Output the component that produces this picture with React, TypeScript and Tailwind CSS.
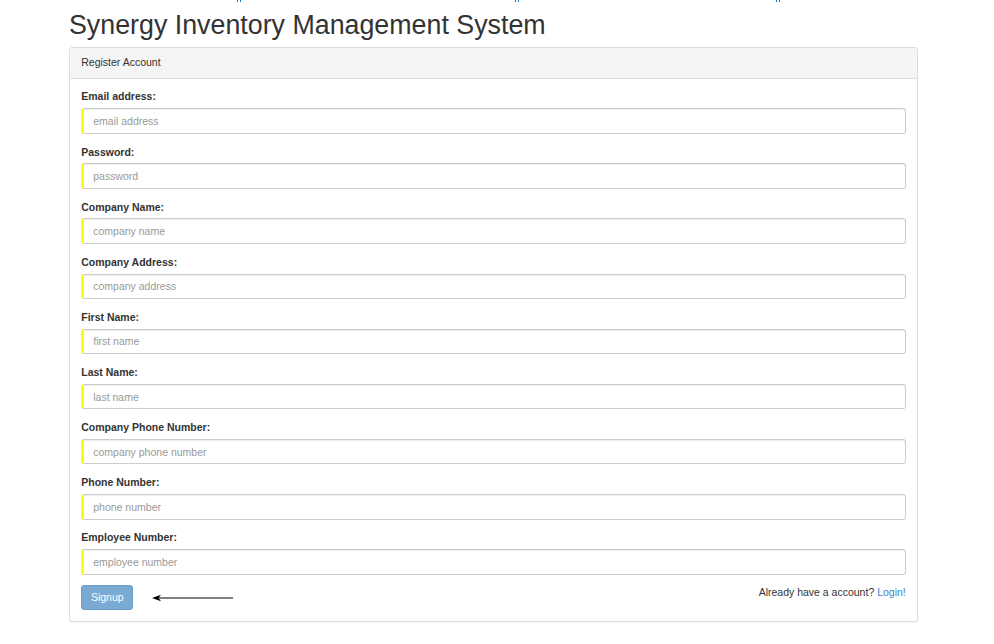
import React from 'react';

const fields = [
  { label: 'Email address:', placeholder: 'email address', type: 'email' },
  { label: 'Password:', placeholder: 'password', type: 'password' },
  { label: 'Company Name:', placeholder: 'company name', type: 'text' },
  { label: 'Company Address:', placeholder: 'company address', type: 'text' },
  { label: 'First Name:', placeholder: 'first name', type: 'text' },
  { label: 'Last Name:', placeholder: 'last name', type: 'text' },
  { label: 'Company Phone Number:', placeholder: 'company phone number', type: 'text' },
  { label: 'Phone Number:', placeholder: 'phone number', type: 'text' },
  { label: 'Employee Number:', placeholder: 'employee number', type: 'text' },
];

const Field = ({ label, placeholder, type }: { label: string; placeholder: string; type: string }) => (
  <div className="mb-[10.87px]">
    <label className="block font-bold text-[10.5px] leading-[15px] mb-[3.75px] text-[#333]">{label}</label>
    <input
      type={type}
      placeholder={placeholder}
      className="block w-full h-[25.5px] px-[9px] text-[10.5px] text-[#555] bg-white border border-[#ccc] border-l-[3px] border-l-[#ffff00] rounded-[3px] shadow-[inset_0_1px_1px_rgba(0,0,0,0.075)] placeholder:text-[#999] outline-none"
    />
  </div>
);

// the cut-off link bits at the very top of the page
const TopMarks = () => (
  <div className="flex h-[3px] items-start">
    {[237, 274, 257].map((gap, i) => (
      <div key={i} className="flex gap-[2px]" style={{ marginLeft: gap }}>
        <span className="block w-px h-[2px] bg-[#1a73e8]" />
        <span className="block w-px h-[2px] bg-[#1a73e8]" />
      </div>
    ))}
  </div>
);

export default function App() {
  return (
    <div className="min-h-[644px] bg-white text-[#333]" style={{ fontFamily: '"Liberation Sans", Arial, sans-serif' }}>
      <TopMarks />
      <div className="ml-[69px] w-[849px]">
        <h1 className="text-[26.8px] leading-[29.7px] mt-[7.7px] mb-[6.6px] font-normal text-[#333]">
          Synergy Inventory Management System
        </h1>
        <div className="border border-[#ddd] rounded-[3px] bg-white shadow-[0_1px_1px_rgba(0,0,0,0.05)]">
          <div className="bg-[#f5f5f5] border-b border-[#ddd] px-[11.25px] py-[7.5px] text-[10.5px] leading-[15px] text-[#333] rounded-t-[3px]">
            Register Account
          </div>
          <div className="px-[11.25px] pt-[10.5px] pb-[11px]">
            {fields.map((f) => (
              <Field key={f.label} {...f} />
            ))}
            <div className="flex items-start justify-between">
              <div className="flex items-center">
                <button className="h-[25px] w-[52px] rounded-[3px] bg-[#7aa9d3] border border-[#6c9fcc] text-white text-[10.5px]">
                  Signup
                </button>
                <svg width="82" height="8" viewBox="0 0 82 8" className="ml-[19px]">
                  <line x1="6" y1="4" x2="81" y2="4" stroke="#000" strokeWidth="1" />
                  <path d="M0 4 L9 0.8 L6.5 4 L9 7.2 Z" fill="#000" />
                </svg>
              </div>
              <p className="text-[10.5px] leading-[15px] text-[#333]">
                Already have a account? <a href="#" className="text-[#3f84c4]">Login!</a>
              </p>
            </div>
          </div>
        </div>
      </div>
    </div>
  );
}
